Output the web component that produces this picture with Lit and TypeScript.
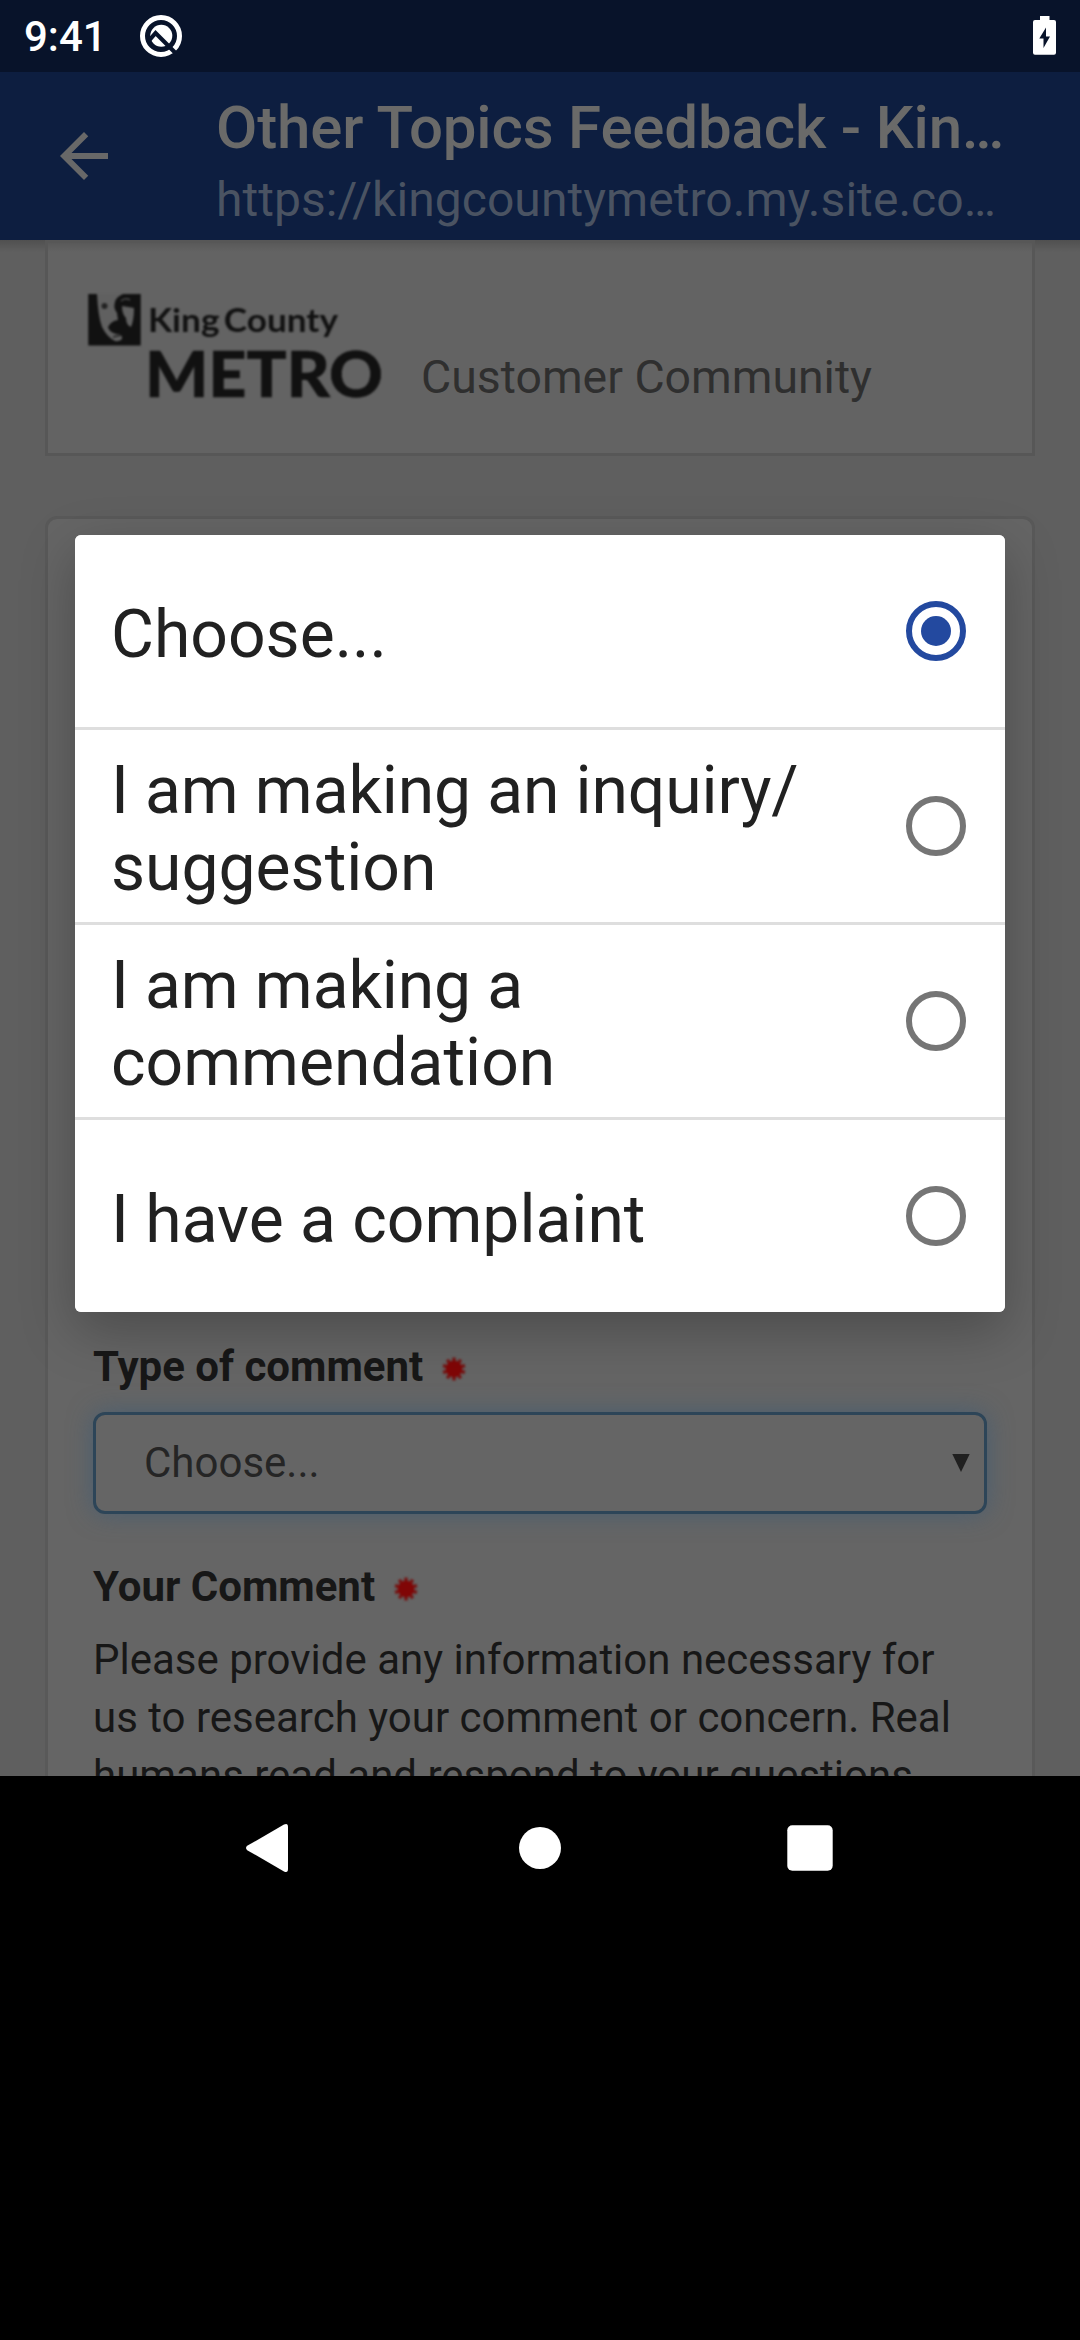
import { LitElement, html, css, svg } from "lit";
import { customElement, property, state } from "lit/decorators.js";
import { classMap } from "lit/directives/class-map.js";

interface Option {
  lines: string[];
}

const OPTIONS: Option[] = [
  { lines: ["Choose..."] },
  { lines: ["I am making an inquiry/", "suggestion"] },
  { lines: ["I am making a", "commendation"] },
  { lines: ["I have a complaint"] },
];

@customElement("status-bar")
class StatusBar extends LitElement {
  static styles = css`
    :host {
      display: flex;
      align-items: center;
      height: 72px;
      padding: 0 21px 0 24px;
      box-sizing: border-box;
      background: #08132a;
      color: #fff;
      font: 500 42px/50px Roboto, sans-serif;
    }
    .time {
      width: 113px;
      padding-top: 2px;
    }
    .icon {
      display: block;
    }
    .battery {
      margin-left: auto;
    }
  `;
  render() {
    return html`
      <span class="time">9:41</span>
      <svg class="icon" width="48" height="48" viewBox="0 0 48 48" fill="none">
        <circle cx="24" cy="24" r="18.500" stroke="#fff" stroke-width="5" />
        <circle cx="24.300" cy="23.800" r="11" fill="#fff" />
        <path d="M11.500 29.200 L18.600 21 L40 42.400" stroke="#08132a" stroke-width="4.200" />
      </svg>
      <svg class="icon battery" width="29" height="40" viewBox="0 0 29 40">
        <path
          d="M10 0H19.500V4H24Q26 4 26 6V36.700Q26 38.700 24 38.700H5Q3 38.700 3 36.700V6Q3 4 5 4H10Z"
          fill="#fff"
        />
        <path d="M16 11.500L9.300 22.500H13.500V32L20 20.500H16Z" fill="#08132a" />
      </svg>
    `;
  }
}

@customElement("browser-bar")
class BrowserBar extends LitElement {
  static styles = css`
    :host {
      display: flex;
      height: 168px;
      background: #0d1e40;
      font-family: Roboto, sans-serif;
    }
    .back {
      display: block;
      width: 72px;
      height: 72px;
      margin: 48px 96px 0 48px;
      fill: #686868;
    }
    .titles {
      padding-top: 20px;
      white-space: nowrap;
    }
    .title {
      font-size: 60px;
      font-weight: 500;
      line-height: 71px;
      letter-spacing: -0.16px;
      color: #6a6a69;
    }
    .url {
      margin-top: 9px;
      font-size: 48px;
      line-height: 56px;
      letter-spacing: 0.06px;
      color: #4a5362;
    }
  `;
  render() {
    return html`
      <svg class="back" viewBox="0 0 24 24">
        <path d="M20 11H7.830l5.590-5.590L12 4l-8 8 8 8 1.410-1.410L7.830 13H20v-2z" />
      </svg>
      <div class="titles">
        <div class="title">Other Topics Feedback - Kin…</div>
        <div class="url">https://kingcountymetro.my.site.co…</div>
      </div>
    `;
  }
}

@customElement("metro-logo")
class MetroLogo extends LitElement {
  static styles = css`
    :host {
      display: block;
    }
    .logo {
      display: block;
      filter: blur(0.8px);
      font-family: Lato, sans-serif;
      fill: #111;
    }
    .name {
      font-size: 33px;
      font-weight: 700;
      word-spacing: -4px;
    }
    .brand {
      font-size: 62.500px;
      font-weight: 900;
      stroke: #111;
      stroke-width: 0.6;
    }
  `;
  render() {
    return html`
      <svg class="logo" width="300" height="110" viewBox="0 0 300 110">
        <rect x="0.300" y="0" width="52.400" height="51.500" fill="#111" />
        <path
          d="M9 0 H35 Q28 3 27 8 Q25 14 29 19 L30 26 Q23 27 20 33 Q21 38 28 40 Q35 40 34 45 Q31 48 27 47 Q19 43 14 33 Q10 22 9 0 Z"
          fill="#606060"
        />
        <path d="M34 12 L46 14 Q46 26 43 33 Q38 31 38 24 Q34 20 34 12 Z" fill="#606060" />
        <path d="M33 7 Q37 3 42 6" stroke="#4a4a4a" stroke-width="1.500" fill="none" />
        <circle cx="16.500" cy="12" r="3" fill="#222" />
        <path d="M25 43 L33 41" stroke="#222" stroke-width="1.500" />
        <text class="name" x="60" y="38" textLength="190" lengthAdjust="spacingAndGlyphs">King County</text>
        <text class="brand" x="57" y="102.500" textLength="238" lengthAdjust="spacingAndGlyphs">METRO</text>
      </svg>
    `;
  }
}

@customElement("field-label")
class FieldLabel extends LitElement {
  @property() text = "";

  static styles = css`
    :host {
      display: flex;
      align-items: center;
      height: 60px;
      font: 700 42px/60px Roboto, sans-serif;
      color: #171717;
    }
    .star {
      margin: 4px 0 0 18px;
      display: block;
      filter: blur(0.8px);
    }
  `;
  render() {
    const rays = Array.from({ length: 5 }, (_, i) => {
      const a = (i * Math.PI) / 5 + Math.PI / 10;
      const x = 11.5 * Math.cos(a);
      const y = 11.5 * Math.sin(a);
      return svg`<line x1=${-x} y1=${-y} x2=${x} y2=${y} stroke="#741716" stroke-width="3.6" />`;
    });
    return html`
      <span>${this.text}</span>
      <svg class="star" width="26" height="26" viewBox="-13 -13 26 26">
        ${rays}
        <circle r="8.200" fill="#800606" />
      </svg>
    `;
  }
}

@customElement("option-dialog")
class OptionDialog extends LitElement {
  @state() private selected = 0;

  static styles = css`
    :host {
      display: flex;
      flex-direction: column;
      gap: 3px;
      width: 930px;
      border-radius: 6px;
      overflow: hidden;
      background: #dedede;
      box-shadow: 0 18px 54px rgba(0, 0, 0, 0.26);
      font: 400 66px/77px Roboto, sans-serif;
      color: #212121;
    }
    .row {
      display: flex;
      align-items: center;
      justify-content: space-between;
      height: 192px;
      padding: 0 39px 0 36px;
      box-sizing: border-box;
      background: #fff;
    }
    .label {
      padding-top: 6px;
      white-space: nowrap;
    }
    .line {
      display: block;
    }
    .line:not(:last-child) {
      letter-spacing: -0.12px;
    }
    .radio {
      display: grid;
      place-items: center;
      width: 60px;
      height: 60px;
      box-sizing: border-box;
      border: 6px solid #757575;
      border-radius: 50%;
    }
    .radio.on {
      border-color: #23499f;
    }
    .radio.on::after {
      content: "";
      width: 30px;
      height: 30px;
      border-radius: 50%;
      background: #23499f;
    }
  `;
  render() {
    return OPTIONS.map(
      (o, i) => html`
        <div class="row" @click=${() => (this.selected = i)}>
          <div class="label">${o.lines.map((l) => html`<span class="line">${l}</span>`)}</div>
          <div class=${classMap({ radio: true, on: i === this.selected })}></div>
        </div>
      `
    );
  }
}

@customElement("system-nav")
class SystemNav extends LitElement {
  static styles = css`
    :host {
      display: flex;
      justify-content: center;
      align-items: center;
      gap: 198px;
      height: 144px;
      background: #000;
    }
    .key {
      display: block;
      width: 72px;
      height: 72px;
      fill: #fff;
    }
  `;
  render() {
    return html`
      <svg class="key" viewBox="0 0 72 72">
        <path d="M13.200 33.800 L50 12.600 Q54 10.800 54 15 V57 Q54 61.200 50 59.400 L13.200 38.200 Q10.800 36 13.200 33.800 Z" />
      </svg>
      <svg class="key" viewBox="0 0 72 72"><circle cx="36" cy="36" r="21" /></svg>
      <svg class="key" viewBox="0 0 72 72"><rect x="13.300" y="13.300" width="45.400" height="45.400" rx="5" /></svg>
    `;
  }
}

@customElement("app-root")
class AppRoot extends LitElement {
  static styles = css`
    :host {
      display: block;
      position: relative;
      width: 1080px;
      height: 2340px;
      overflow: hidden;
      background: #000;
      font-family: Roboto, sans-serif;
    }
    .page {
      height: 1536px;
      padding: 0 45px;
      box-sizing: border-box;
      overflow: hidden;
      background: linear-gradient(rgba(0, 0, 0, 0.16), transparent 12px), #5f5f5f;
    }
    .banner {
      display: flex;
      align-items: flex-start;
      height: 216px;
      box-sizing: border-box;
      border: 3px solid #575757;
      background: linear-gradient(rgba(0, 0, 0, 0.1), transparent 9px), #636363;
      padding: 51px 0 0 40px;
    }
    .community {
      margin: 53px 0 0 33px;
      font-size: 46.400px;
      line-height: 60px;
      color: #2f2f2f;
    }
    .form {
      margin-top: 60px;
      height: 1400px;
      box-sizing: border-box;
      border: 3px solid #595959;
      border-radius: 12px;
      background: #656565;
      padding: 818px 45px 0;
    }
    .select {
      display: flex;
      align-items: center;
      justify-content: space-between;
      height: 102px;
      margin: 15px 0 43px;
      padding: 0 14px 0 48px;
      box-sizing: border-box;
      border: 3px solid #2d4558;
      border-radius: 12px;
      box-shadow: 0 0 24px rgba(55, 90, 122, 0.6);
      font-size: 42px;
      color: #252525;
    }
    .value {
      padding-bottom: 2px;
    }
    .arrow {
      display: block;
      fill: #202020;
    }
    .help {
      margin: 14px 0 0;
      font-size: 42px;
      line-height: 58.200px;
      color: #171717;
      white-space: nowrap;
    }
    .dialog {
      position: absolute;
      left: 75px;
      top: 535px;
    }
  `;
  render() {
    return html`
      <status-bar></status-bar>
      <browser-bar></browser-bar>
      <main class="page">
        <header class="banner">
          <metro-logo></metro-logo>
          <span class="community">Customer Community</span>
        </header>
        <section class="form">
          <field-label text="Type of comment"></field-label>
          <div class="select">
            <span class="value">Choose...</span>
            <svg class="arrow" width="18" height="18" viewBox="0 0 18 18"><path d="M0.300 0H17.700L9 18Z" /></svg>
          </div>
          <field-label text="Your Comment"></field-label>
          <p class="help">
            Please provide any information necessary for<br />us to research your comment or concern. Real<br />humans
            read and respond to your questions,
          </p>
        </section>
      </main>
      <system-nav></system-nav>
      <option-dialog class="dialog"></option-dialog>
    `;
  }
}
